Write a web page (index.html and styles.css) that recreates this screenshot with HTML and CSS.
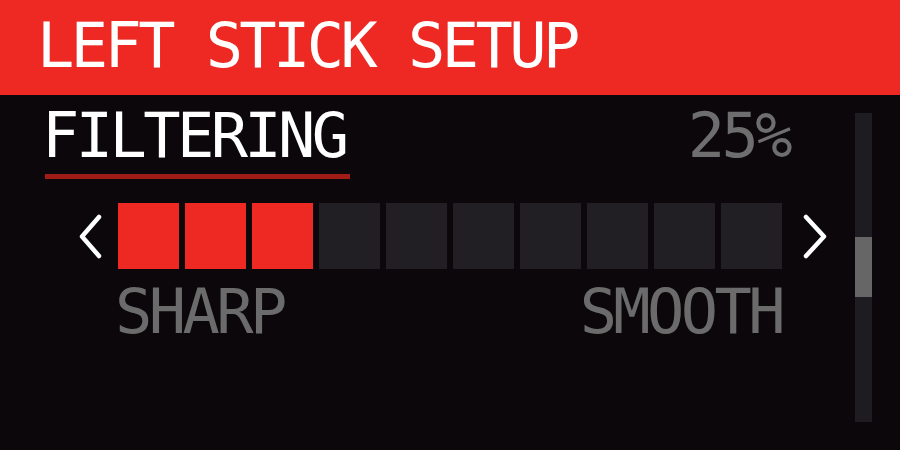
FILE: index.html
```html
<!DOCTYPE html>
<html>
<head>
<meta charset="utf-8">
<link rel="stylesheet" href="styles.css">
</head>
<body>
<div class="screen">
  <div class="header">LEFT STICK SETUP</div>
  <div class="body">
    <div class="content">
      <div class="title-row">
        <div class="title">FILTERING</div>
        <div class="value">25%</div>
      </div>
      <div class="bar-row">
        <svg class="chev" width="24" height="45" viewBox="0 0 24 45"><polyline points="21,3 4,22.5 21,42" /></svg>
        <div class="segments">
          <div class="seg on"></div>
          <div class="seg on"></div>
          <div class="seg on"></div>
          <div class="seg"></div>
          <div class="seg"></div>
          <div class="seg"></div>
          <div class="seg"></div>
          <div class="seg"></div>
          <div class="seg"></div>
          <div class="seg"></div>
        </div>
        <svg class="chev" width="25" height="45" viewBox="0 0 25 45"><polyline points="3,3 21,22.5 3,42" /></svg>
      </div>
      <div class="labels">
        <span class="lbl lbl-left">SHARP</span>
        <span class="lbl lbl-right">SMOOTH</span>
      </div>
    </div>
    <div class="scroll">
      <div class="thumb"></div>
    </div>
  </div>
</div>
</body>
</html>
```
FILE: styles.css
```css
html, body {
  margin: 0;
  padding: 0;
  background: #0b070a;
}
.screen {
  width: 900px;
  height: 450px;
  display: flex;
  flex-direction: column;
  font-family: "DejaVu Sans Mono", monospace;
  font-size: 62px;
  line-height: 62px;
  letter-spacing: -3.6px;
  overflow: hidden;
}
.header {
  height: 95px;
  box-sizing: border-box;
  padding: 15px 0 0 37px;
  background: #ee2923;
  color: #ffffff;
}
.body {
  display: flex;
  padding-left: 45px;
}
.content {
  width: 748px;
  flex-shrink: 0;
  display: flex;
  flex-direction: column;
}
.title-row {
  margin-top: 10px;
  display: flex;
  justify-content: space-between;
  align-items: flex-start;
}
.title {
  width: 305px;
  text-indent: -3px;
  color: #ffffff;
  padding-bottom: 7px;
  border-bottom: 5px solid #a01c16;
}
.value {
  color: #6e6e6e;
  margin-right: 4px;
}
.bar-row {
  margin-top: 24px;
  margin-left: 33px;
  display: flex;
  align-items: center;
}
.chev {
  flex-shrink: 0;
}
.chev polyline {
  fill: none;
  stroke: #ffffff;
  stroke-width: 4.5;
  stroke-linecap: round;
  stroke-linejoin: round;
}
.segments {
  flex-shrink: 0;
  width: 664px;
  height: 66px;
  margin: 0 21px 0 16px;
  display: flex;
  gap: 6.5px;
}
.seg {
  flex: 1;
  background: #211f23;
}
.seg.on {
  background: #ee2923;
}
.labels {
  margin-top: 12px;
  margin-left: 73px;
  width: 664px;
  display: flex;
  justify-content: space-between;
  color: #6b6b6b;
}
.lbl-left {
  margin-left: -3px;
}
.scroll {
  flex-shrink: 0;
  margin-top: 18px;
  margin-left: 62px;
  width: 17px;
  height: 309px;
  background: #1e1c20;
  display: flex;
  flex-direction: column;
}
.thumb {
  margin-top: 124px;
  height: 60px;
  background: #666666;
}
```
